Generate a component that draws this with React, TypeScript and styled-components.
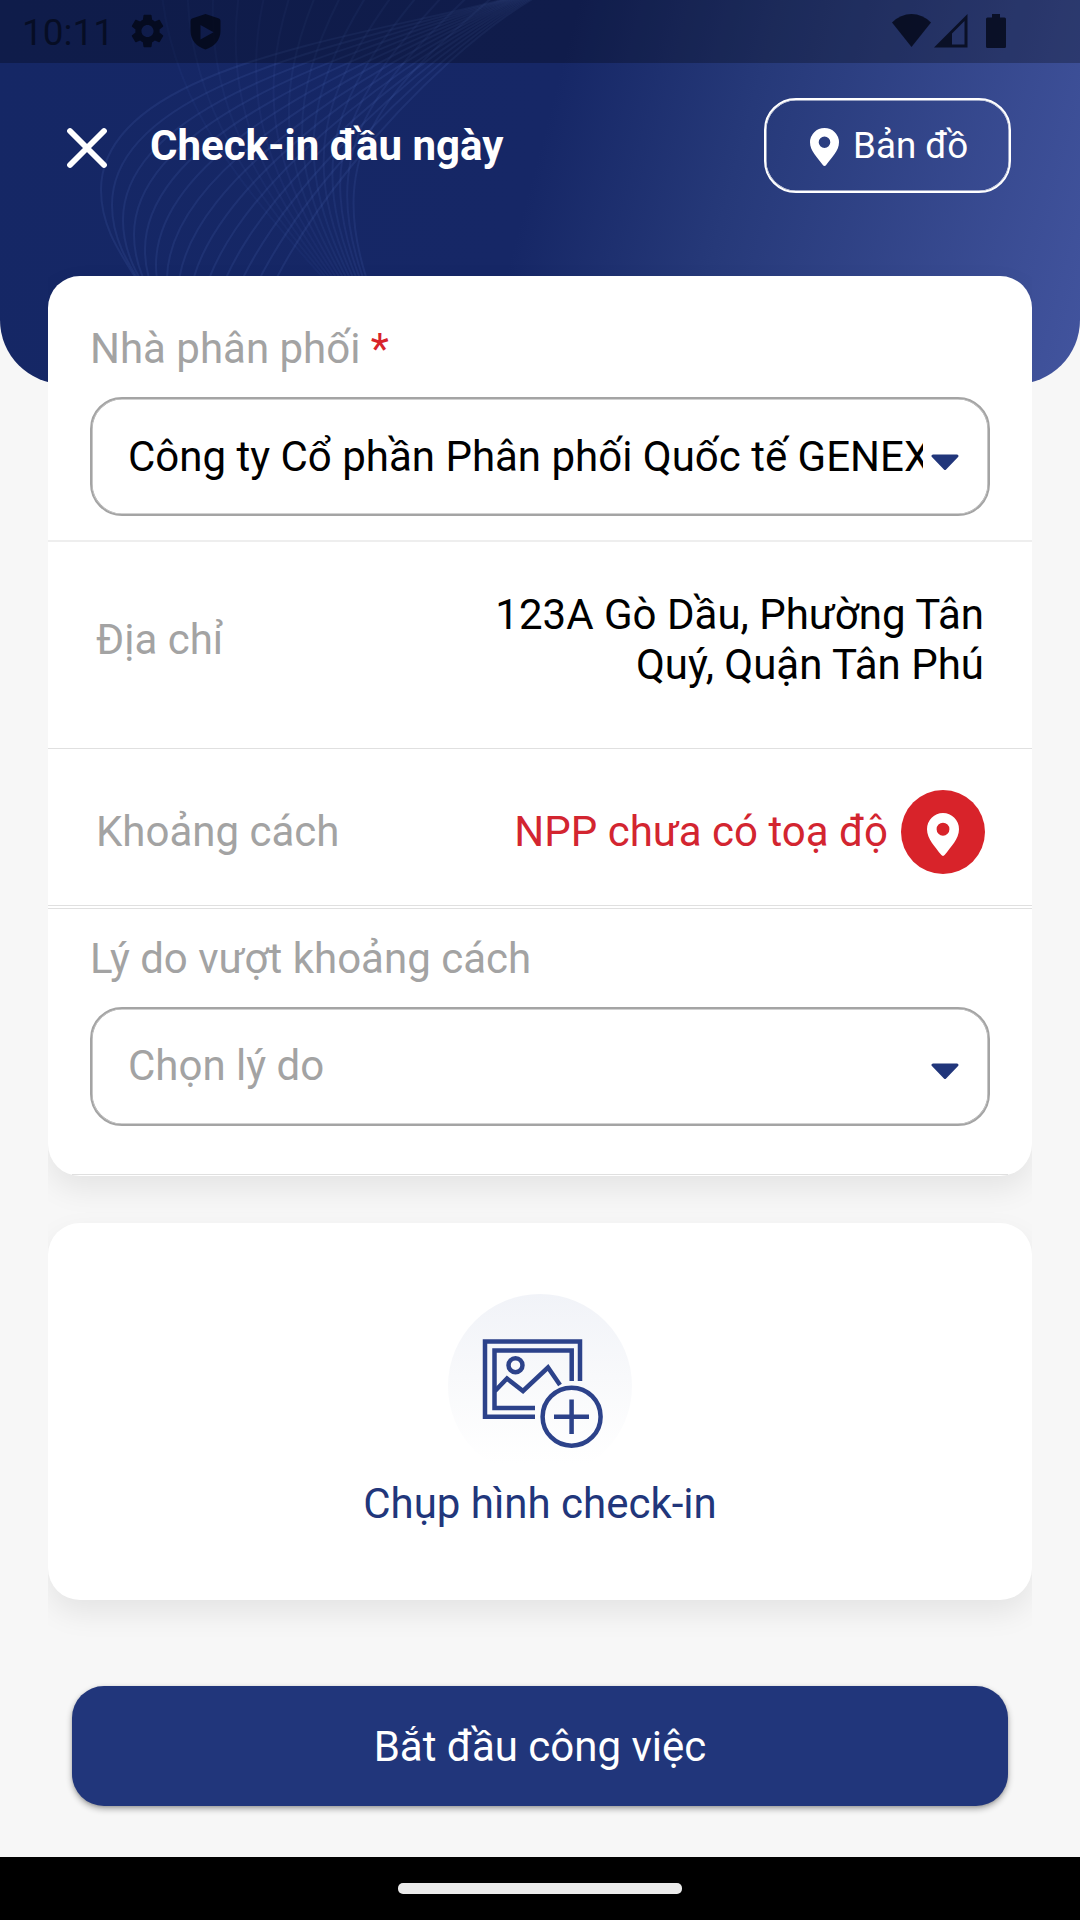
import React from "react";
import styled, { createGlobalStyle } from "styled-components";

const Global = createGlobalStyle`
  * { box-sizing: border-box; }
  html, body { margin: 0; padding: 0; background: #f7f7f7; }
  body { font-family: Roboto, "Noto Sans", sans-serif; }
  button { font: inherit; border: 0; padding: 0; margin: 0; background: none; }
`;

const Screen = styled.div`
  width: 1080px;
  height: 1920px;
  display: flex;
  flex-direction: column;
  overflow: hidden;
  background: #f7f7f7;
  font-size: 42px;
  line-height: 50px;
  color: #000;
`;

const Header = styled.header`
  position: relative;
  flex: none;
  height: 384px;
  display: flex;
  flex-direction: column;
  overflow: hidden;
  border-radius: 0 0 64px 64px;
  background: linear-gradient(105deg, #152765 0%, #162766 49%, #263979 66%, #42549e 100%);
`;

const Waves = styled.svg`
  position: absolute;
  left: 0;
  top: 0;
  pointer-events: none;
`;

const StatusBar = styled.div`
  position: relative;
  height: 63px;
  flex: none;
  display: flex;
  align-items: flex-start;
  padding: 0 74px 0 22px;
  background: rgba(0, 0, 0, 0.26);
  color: rgba(3, 7, 20, 0.78);
  svg { display: block; flex: none; }
`;

const Clock = styled.span`
  width: 109px;
  padding-top: 8px;
  font-size: 37px;
  line-height: 50px;
  color: rgba(3, 7, 20, 0.7);
`;

const StatusIcons = styled.div<{ $end?: boolean }>`
  display: flex;
  padding-top: 14px;
  margin-left: ${(p) => (p.$end ? "auto" : "0")};
`;

const ShieldIcon = styled.svg`
  margin-left: 26px;
`;

const SignalIcon = styled.svg`
  margin-left: 3px;
`;

const BatteryIcon = styled.svg`
  margin-left: 18px;
`;

const AppBar = styled.div`
  position: relative;
  display: flex;
  align-items: center;
  height: 95px;
  margin-top: 35px;
  padding: 0 69px 0 66px;
`;

const CloseButton = styled.button`
  width: 42px;
  height: 42px;
  margin-top: 5px;
  color: #fff;
  svg { display: block; }
`;

const Title = styled.h1`
  margin: 0 auto 0 42px;
  font-size: 42px;
  line-height: 50px;
  font-weight: 700;
  color: #fff;
`;

const MapButton = styled.button`
  display: flex;
  align-items: center;
  width: 247px;
  height: 95px;
  padding-left: 44px;
  border: 2px solid #fff;
  box-shadow: inset 0 0 0 0.5px #fff;
  border-radius: 32px;
  color: #fff;
  font-size: 36.750px;
  line-height: 44px;
  span { margin-left: 14px; }
  svg { margin-top: 3px; }
`;

const List = styled.main`
  position: relative;
  flex: none;
  display: flex;
  flex-direction: column;
  gap: 47px;
  margin: -108px 48px 0;
  clip-path: inset(-40px 0 -60px 0);
`;

const Card = styled.section`
  display: flex;
  flex-direction: column;
  background: #fff;
  border-radius: 32px;
  box-shadow: 0 13px 30px rgba(0, 0, 0, 0.08);
`;

const Field = styled.div<{ $top: number; $bottom: number }>`
  display: flex;
  flex-direction: column;
  gap: 23px;
  padding: ${(p) => p.$top}px 42px ${(p) => p.$bottom}px;
`;

const Label = styled.span`
  color: #a3a3a3;
`;

const Required = styled.span`
  color: #d8232a;
`;

const Select = styled.button<{ $lift?: number }>`
  display: flex;
  align-items: center;
  height: 119px;
  padding: 0 29px ${(p) => p.$lift ?? 0}px 36px;
  border: 2px solid #a4a4a4;
  box-shadow: inset 0 0 0 0.6px #a4a4a4;
  border-radius: 32px;
  text-align: left;
`;

const SelectValue = styled.span<{ $placeholder?: boolean }>`
  flex: 1;
  min-width: 0;
  overflow: hidden;
  white-space: nowrap;
  color: ${(p) => (p.$placeholder ? "#a3a3a3" : "#000")};
`;

const Caret = styled.svg`
  display: block;
  flex: none;
  margin: 11px 0 0 8px;
`;

const Row = styled.div<{ $height: number; $top?: number; $bottom?: number }>`
  display: flex;
  align-items: center;
  justify-content: space-between;
  height: ${(p) => p.$height}px;
  padding: ${(p) => p.$top ?? 0}px 48px ${(p) => p.$bottom ?? 0}px;
`;

const Address = styled.p`
  margin: 0;
  width: 520px;
  text-align: right;
`;

const Distance = styled.div`
  display: flex;
  align-items: center;
  gap: 13px;
  margin-right: -1px;
  color: #d32530;
`;

const PinBadge = styled.span`
  display: flex;
  align-items: center;
  justify-content: center;
  width: 84px;
  height: 84px;
  border-radius: 50%;
  background: #d8232a;
  color: #fff;
  svg { margin-top: 5px; }
`;

const Divider = styled.div<{ $thick?: boolean; $inset?: boolean }>`
  height: ${(p) => (p.$thick ? 2 : 1)}px;
  margin: 0 ${(p) => (p.$inset ? 24 : 0)}px;
  background: ${(p) => (p.$thick ? "#eeeeee" : "#e0e0e0")};
`;

const Spacer = styled.div<{ $h: number }>`
  height: ${(p) => p.$h}px;
`;

const PhotoCard = styled(Card)`
  align-items: center;
  height: 377px;
  padding-top: 71px;
  color: #21367b;
`;

const PhotoCircle = styled.div`
  width: 184px;
  height: 184px;
  margin-bottom: 1px;
  border-radius: 50%;
  background: linear-gradient(180deg, #f1f3f8 0%, #f8f9fb 45%, #ffffff 92%);
  svg { display: block; }
`;

const StartButton = styled.button`
  flex: none;
  height: 120px;
  margin: 86px 72px 0;
  padding-top: 1px;
  border-radius: 32px;
  background: #21367b;
  color: #fff;
  box-shadow: 0 3px 6px rgba(0, 0, 0, 0.32), 0 1px 3px rgba(0, 0, 0, 0.12);
`;

const NavBar = styled.footer`
  flex: none;
  display: flex;
  justify-content: center;
  height: 63px;
  margin-top: auto;
  padding-top: 26px;
  background: #000;
`;

const NavPill = styled.div`
  width: 284px;
  height: 11px;
  border-radius: 5px;
  background: #ebebeb;
`;

const lerp = (a: number, b: number, t: number) => a + (b - a) * t;

function HeaderWaves() {
  const loops = Array.from({ length: 14 }, (_, k) => {
    const t = k / 13;
    const x = 101 + 11 * k;
    const y = 190 + 15 * k;
    return `M${lerp(515, 545, t)},${lerp(-4, -8, t)} C${lerp(390, 430, t)},${lerp(34, 52, t)} ${x},${lerp(60, 265, t)} ${x},${y} C${x},${y + 35} ${x + 17},${y + 60} ${x + 36},${y + 90}`;
  });
  const strands = Array.from({ length: 14 }, (_, k) => {
    const t = k / 13;
    return `M${lerp(162, 495, t)},-5 C${lerp(175, 385, t)},${lerp(110, 90, t)} ${lerp(245, 325, t)},${lerp(190, 150, t)} ${lerp(325, 367, t)},280`;
  });
  return (
    <Waves width="1080" height="277" viewBox="0 0 1080 277" fill="none" strokeWidth="2">
      {loops.map((d, i) => (
        <path key={i} d={d} stroke="#5573c4" strokeOpacity={0.15} />
      ))}
      {strands.map((d, i) => (
        <path key={i} d={d} stroke="#5573c4" strokeOpacity={0.06 + i * 0.006} />
      ))}
    </Waves>
  );
}

function Pin({ w, h }: { w: number; h: number }) {
  return (
    <svg width={w} height={h} viewBox="5 2 14 18.600" preserveAspectRatio="none" fill="currentColor">
      <path
        fillRule="evenodd"
        d="M12 2a7 7 0 0 0-7 7c0 4.200 3.600 7.600 6.200 11.100.4.600 1.200.600 1.600 0C15.400 16.600 19 13.200 19 9a7 7 0 0 0-7-7zM12 6.200a2.800 2.800 0 1 1 0 5.600a2.800 2.800 0 1 1 0-5.600z"
      />
    </svg>
  );
}

function CaretIcon() {
  return (
    <Caret width="28" height="17" viewBox="0 0 28 17">
      <path d="M2 2H26L14 14.500Z" fill="#21367b" stroke="#21367b" strokeWidth="3" strokeLinejoin="round" />
    </Caret>
  );
}

function PhotoIcon() {
  return (
    <svg width="184" height="184" viewBox="0 0 184 184" fill="none" stroke="#2c428a" strokeWidth="4.500">
      <path d="M87 122.700H37V47.500H132V87" />
      <path d="M87 114H46.500V56.500H123.700V87" />
      <circle cx="67.500" cy="71.200" r="7" />
      <path d="M47 97L59 84.500L75 97L100 73.500L112 91" />
      <circle cx="123.600" cy="122.700" r="29" />
      <path d="M123.600 105.500V140M106 122.700H141" />
    </svg>
  );
}

export default function App() {
  return (
    <>
      <Global />
      <Screen>
        <Header>
          <HeaderWaves />
          <StatusBar>
            <Clock>10:11</Clock>
            <StatusIcons>
              <svg width="33" height="34" viewBox="2.200 2 19.600 20" fill="currentColor">
                <path d="M19.140 12.940c.04-.3.06-.61.06-.94 0-.32-.02-.64-.07-.94l2.030-1.580a.49.49 0 0 0 .12-.61l-1.920-3.320a.488.488 0 0 0-.59-.22l-2.390.96c-.5-.38-1.030-.7-1.620-.94l-.36-2.540a.484.484 0 0 0-.48-.41h-3.840c-.24 0-.43.17-.47.41l-.36 2.540c-.59.24-1.130.57-1.620.94l-2.390-.96c-.22-.08-.47 0-.59.22L2.740 8.870c-.12.21-.08.47.12.61l2.030 1.580c-.05.3-.09.63-.09.94s.02.64.07.94l-2.030 1.580a.49.49 0 0 0-.12.61l1.920 3.320c.12.22.37.29.59.22l2.390-.96c.5.38 1.030.7 1.620.94l.36 2.540c.05.24.24.41.48.41h3.840c.24 0 .44-.17.47-.41l.36-2.540c.59-.24 1.130-.56 1.620-.94l2.390.96c.22.08.47 0 .59-.22l1.920-3.320c.12-.22.07-.47-.12-.61l-2.010-1.580zM12 15.600c-1.980 0-3.600-1.620-3.600-3.600s1.620-3.600 3.600-3.600 3.600 1.620 3.600 3.600-1.620 3.600-3.600 3.600z" />
              </svg>
              <ShieldIcon width="31" height="36" viewBox="0 0 31 36" fill="currentColor">
                <path fillRule="evenodd" d="M15.500 0L29 4.500Q30.500 5 30.500 7V17C30.500 26 24 33 15.500 35.500C7 33 .5 26 .5 17V7Q.5 5 2 4.500ZM10.500 11V25.500L23.500 18.200Z" />
              </ShieldIcon>
            </StatusIcons>
            <StatusIcons $end>
              <svg width="39" height="33" viewBox="0 0 39 33" fill="currentColor">
                <path d="M0 8.500Q8.500 0 19.500 0T39 8.500L19.500 33Z" />
              </svg>
              <SignalIcon width="34" height="34" viewBox="0 0 34 34" fill="currentColor">
                <path fillRule="evenodd" d="M0 33.500L33.500 0V33.500ZM18 19.500V30.500H30.500V7Z" />
              </SignalIcon>
              <BatteryIcon width="20" height="34" viewBox="0 0 20 34" fill="currentColor">
                <path d="M6 0H14V3.500H18.500Q20 3.500 20 5V32.500Q20 34 18.500 34H1.500Q0 34 0 32.500V5Q0 3.500 1.500 3.500H6Z" />
              </BatteryIcon>
            </StatusIcons>
          </StatusBar>
          <AppBar>
            <CloseButton aria-label="Close">
              <svg width="42" height="42" viewBox="0 0 42 42" stroke="currentColor" strokeWidth="5.800" strokeLinecap="round">
                <path d="M4 4L38 38M38 4L4 38" />
              </svg>
            </CloseButton>
            <Title>Check-in đầu ngày</Title>
            <MapButton>
              <Pin w={29} h={38} />
              <span>Bản đồ</span>
            </MapButton>
          </AppBar>
        </Header>

        <List>
          <Card>
            <Field $top={48} $bottom={24}>
              <Label>
                Nhà phân phối <Required>*</Required>
              </Label>
              <Select>
                <SelectValue>Công ty Cổ phần Phân phối Quốc tế GENEXIA</SelectValue>
                <CaretIcon />
              </Select>
            </Field>
            <Divider $thick />
            <Row $height={206} $bottom={10}>
              <Label>Địa chỉ</Label>
              <Address>123A Gò Dầu, Phường Tân Quý, Quận Tân Phú</Address>
            </Row>
            <Divider />
            <Row $height={156} $top={9}>
              <Label>Khoảng cách</Label>
              <Distance>
                NPP chưa có toạ độ
                <PinBadge>
                  <Pin w={32} h={43} />
                </PinBadge>
              </Distance>
            </Row>
            <Divider />
            <Spacer $h={2} />
            <Divider />
            <Field $top={25} $bottom={48}>
              <Label>Lý do vượt khoảng cách</Label>
              <Select $lift={1}>
                <SelectValue $placeholder>Chọn lý do</SelectValue>
                <CaretIcon />
              </Select>
            </Field>
            <Divider $inset />
            <Spacer $h={1} />
          </Card>
          <PhotoCard>
            <PhotoCircle>
              <PhotoIcon />
            </PhotoCircle>
            <span>Chụp hình check-in</span>
          </PhotoCard>
        </List>

        <StartButton>Bắt đầu công việc</StartButton>
        <NavBar>
          <NavPill />
        </NavBar>
      </Screen>
    </>
  );
}
